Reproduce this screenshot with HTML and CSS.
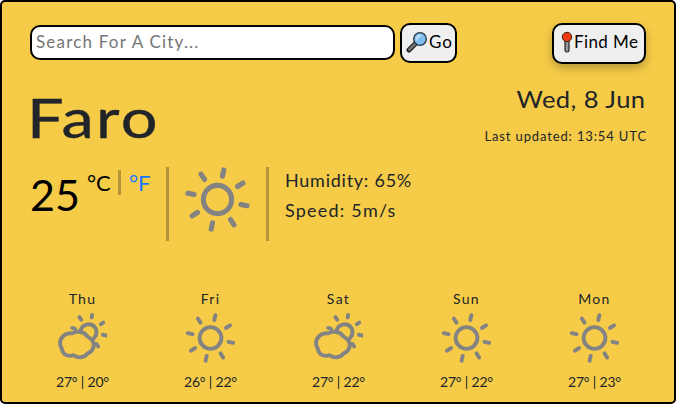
FILE: index.html
```html
<!DOCTYPE html>
<html lang="en">
<head>
<meta charset="utf-8">
<title>Weather</title>
<link rel="stylesheet" href="styles.css">
</head>
<body>
<svg class="defs" aria-hidden="true">
  <symbol id="sun" viewBox="-32 -32 64 64">
    <g fill="none" stroke="#838383" stroke-width="5" stroke-linecap="round">
      <circle r="13.9"/>
      <g transform="rotate(12)">
        <path d="M0-23.5V-29.800M0 23.5V29.800M23.5 0H29.800M-23.5 0H-29.800"/>
        <path transform="rotate(45)" d="M0-23.5V-29.800M0 23.5V29.800M23.5 0H29.800M-23.5 0H-29.800"/>
      </g>
    </g>
  </symbol>
  <symbol id="cloud" viewBox="82.5 100 147 147">
    <g fill="none" stroke="#838383" stroke-width="11.5" stroke-linecap="round" stroke-linejoin="round">
      <path d="M151 149C158 130 184 128 194 144C201 156 196 168 187 177"/>
      <path d="M125 160C105 157 90 172 90 189C90 198 95 203 97 211C101 224 115 229 130 224C143 234 162 232 171 219C186 214 193 197 187 184C184 178 177 174 170 168C158 152 139 152 125 160Z"/>
      <path d="M183 113L184 106M147 112L152 120M210 133L217 128M216 164L224 166M197 191L202 198M126 144L135 147"/>
    </g>
  </symbol>
</svg>
<main class="card">
  <form class="search">
    <input class="field" type="text" placeholder="Search For A City...">
    <button class="btn go" type="button">
      <svg class="glass" viewBox="0 0 22 22"><path d="M10 12L3 19" stroke="#222" stroke-width="5" stroke-linecap="round"/><path d="M9 13L3.300 18.700" stroke="#777" stroke-width="2.500" stroke-linecap="round"/><circle cx="14" cy="8" r="6.300" fill="#7fbff0" stroke="#263746" stroke-width="1.300"/><path d="M10 10A4.500 4.500 0 0 1 16 4Z" fill="#b5dcf8"/></svg><span class="go-text">Go</span>
    </button>
    <button class="btn find" type="button">
      <svg class="pin" viewBox="0 0 12 22"><rect x="4" y="9" width="4" height="12" rx="1.800" fill="#999" stroke="#222" stroke-width="1.200"/><circle cx="6" cy="6" r="4.700" fill="#f13a16" stroke="#321" stroke-width="1"/></svg><span class="find-text">Find Me</span>
    </button>
  </form>
  <header class="head">
    <h1 class="city">Faro</h1>
    <div class="when"><div class="date">Wed, 8 Jun</div><div class="updated">Last updated: 13:54 UTC</div></div>
  </header>
  <section class="now">
    <div class="temp"><span class="degrees">25</span><span class="unit">°C</span><span class="bar"></span><span class="unit link">°F</span></div>
    <div class="current"><svg class="sun-big"><use href="#sun"/></svg></div>
    <div class="stats"><div class="humidity">Humidity: 65%</div><div class="speed">Speed: 5m/s</div></div>
  </section>
  <section class="days">
    <div class="day"><div class="name">Thu</div><svg class="icon"><use href="#cloud"/></svg><div class="range">27° | 20°</div></div>
    <div class="day"><div class="name">Fri</div><svg class="icon"><use href="#sun"/></svg><div class="range">26° | 22°</div></div>
    <div class="day"><div class="name">Sat</div><svg class="icon"><use href="#cloud"/></svg><div class="range">27° | 22°</div></div>
    <div class="day"><div class="name">Sun</div><svg class="icon"><use href="#sun"/></svg><div class="range">27° | 22°</div></div>
    <div class="day"><div class="name">Mon</div><svg class="icon"><use href="#sun"/></svg><div class="range">27° | 23°</div></div>
  </section>
</main>
</body>
</html>
```
FILE: styles.css
```css
* { box-sizing: border-box; }
body { margin: 0; background: #fff; color: #212529; font-family: Lato, "Open Sans", sans-serif; overflow: hidden; }
svg { display: block; flex: none; }
.defs { display: none; }
.card { width: 676px; height: 404px; border: 2px solid #000; border-radius: 5px; background: #f5cb48; padding: 21px 28px 0; white-space: nowrap; }
.search { display: flex; height: 42px; margin: 0; align-items: flex-start; }
.field { width: 365px; height: 35px; margin-top: 2px; border: 2px solid #000; border-radius: 10px; padding: 0 4px 2px; font: 17px Lato, sans-serif; letter-spacing: 1.2px; outline: 0; background: #fff; }
.field::placeholder { color: #757575; opacity: 1; }
.btn { display: flex; align-items: center; border: 2px solid #000; border-radius: 10px; background: #efefef; color: #000; font: 17px Lato, sans-serif; padding: 0 0 3px 4px; }
.go { width: 57px; height: 40px; margin-left: 5px; }
.glass { width: 22px; height: 22px; }
.go-text { letter-spacing: .9px; margin-left: 1px; }
.find { width: 94px; height: 41px; margin-left: auto; padding: 0 0 4px 7px; box-shadow: 0 4px 8px rgba(0,0,0,.25); }
.pin { width: 12px; height: 22px; margin-right: 1px; }
.find-text { letter-spacing: .4px; }
.head { display: flex; justify-content: space-between; height: 102px; }
.city { margin: 15px 0 0 -3px; font-size: 55px; line-height: 74px; font-weight: 400; letter-spacing: 2px; transform: scaleX(1.18); transform-origin: left; -webkit-text-stroke: .4px #212529; }
.when { text-align: right; }
.date { margin-top: 18px; font-size: 23px; line-height: 32px; letter-spacing: .4px; transform: scaleX(1.11); transform-origin: right; }
.updated { margin-top: 12px; font-size: 13px; line-height: 18px; letter-spacing: .87px; margin-right: -1px; }
.now { display: flex; height: 124px; }
.temp { display: flex; width: 136px; color: #000; align-items: flex-start; }
.degrees { font-size: 43px; line-height: 55px; width: 57px; }
.unit { font-size: 22px; line-height: 31px; width: 31px; }
.bar { width: 3px; height: 25px; margin: 3px 8px 0 0; background: #b59739; }
.link { color: #1677ff; }
.current { width: 103px; height: 74px; border: solid #b59739; border-width: 0 3px; padding: 0 0 0 16px; }
.sun-big { width: 65px; height: 65px; }
.stats { margin-left: 16px; font-size: 18px; line-height: 30px; margin-top: -2px; }
.humidity { letter-spacing: .75px; }
.speed { letter-spacing: 1.2px; }
.days { display: grid; grid-template-columns: repeat(5, 128px); margin-left: -11px; margin-top: -2px; text-align: center; }
.day { padding-right: 1px; }
.name { font-size: 14px; line-height: 20px; letter-spacing: 1.3px; margin-bottom: 4px; }
.icon { width: 50px; height: 50px; margin: 0 auto; transform: translateX(-.5px); }
.range { margin-top: 9px; font-size: 14px; line-height: 20px; letter-spacing: -.2px; }
```
